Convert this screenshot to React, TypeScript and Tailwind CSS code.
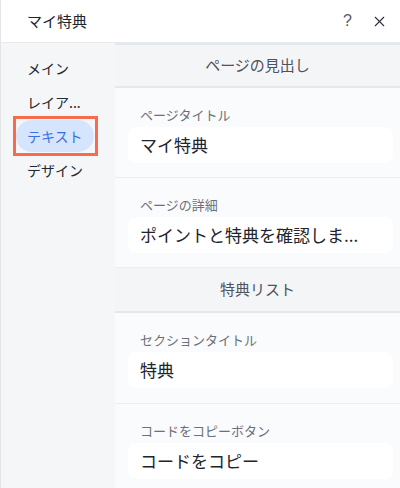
import { X } from 'lucide-react';

const navItems = ['メイン', 'レイア...', 'テキスト', 'デザイン'];

function SectionHeader({ title, tall }: { title: string; tall?: boolean }) {
  return (
    <div
      className={`${tall ? 'h-[45px]' : 'h-[43px]'} shrink-0 flex items-center justify-center bg-[#f4f5f7] text-[15px] text-[#4d525c] border-b-2 border-[#e4e8ee]`}
    >
      {title}
    </div>
  );
}

function TextField({ label, value, roomy }: { label: string; value: string; roomy?: boolean }) {
  return (
    <div
      className={`shrink-0 pt-[18px] ${roomy ? 'pb-[15px]' : 'pb-[14px]'} pl-[13px] pr-[7px] bg-[#fafbfc] border-b border-[#eceef1]`}
    >
      <div className="pl-3 text-[13px] leading-[18px] text-[#6c707a]">{label}</div>
      <div className="mt-[3px] h-9 rounded-lg bg-white flex items-center px-3 text-[17px] text-[#20242e] whitespace-nowrap overflow-hidden">
        {value}
      </div>
    </div>
  );
}

export default function App() {
  return (
    <div
      className="w-[400px] h-[488px] overflow-hidden bg-white border-l border-[#e3e5e8] flex flex-col"
      style={{ fontFamily: '"Noto Sans CJK JP", "Noto Sans", sans-serif' }}
    >
      <div className="h-[43px] shrink-0 flex items-center pl-[26px] pr-[12px] border-b border-[#e8eaed]">
        <span className="text-[15px] text-[#20242e]">マイ特典</span>
        <span className="ml-auto text-[16px] text-[#555a64] mr-[19px]" style={{ fontFamily: '"Liberation Sans", sans-serif' }}>?</span>
        <X size={17} strokeWidth={1.5} className="text-[#2a2e38]" />
      </div>

      <div className="flex flex-1 min-h-0">
        {/* nav */}
        <div className="w-[114px] shrink-0 bg-[#f5f6f8] pt-[9px] flex flex-col gap-[2px]">
          {navItems.map((item) => {
            const active = item === 'テキスト';
            return (
              <div key={item} className="h-8 pl-[15px] flex items-center">
                {active ? (
                  <div className="relative">
                    <div className="h-8 px-[11px] rounded-full bg-[#d5e5fd] flex items-center text-[14px] text-[#3a6ee0]">
                      {item}
                    </div>
                    <div className="absolute -left-[3px] -right-[4px] -top-[4px] -bottom-[4px] border-[3px] border-[#f86b4f]" />
                  </div>
                ) : (
                  <span className="pl-[11px] text-[14px] text-[#23272f]">{item}</span>
                )}
              </div>
            );
          })}
        </div>

        {/* content */}
        <div className="flex-1 min-h-0 overflow-hidden flex flex-col border-t-2 border-[#e4e8ee]">
          <SectionHeader title="ページの見出し" />
          <TextField label="ページタイトル" value="マイ特典" />
          <TextField label="ページの詳細" value="ポイントと特典を確認しま..." />
          <SectionHeader title="特典リスト" tall />
          <TextField label="セクションタイトル" value="特典" roomy />
          <TextField label="コードをコピーボタン" value="コードをコピー" />
        </div>
      </div>
    </div>
  );
}
